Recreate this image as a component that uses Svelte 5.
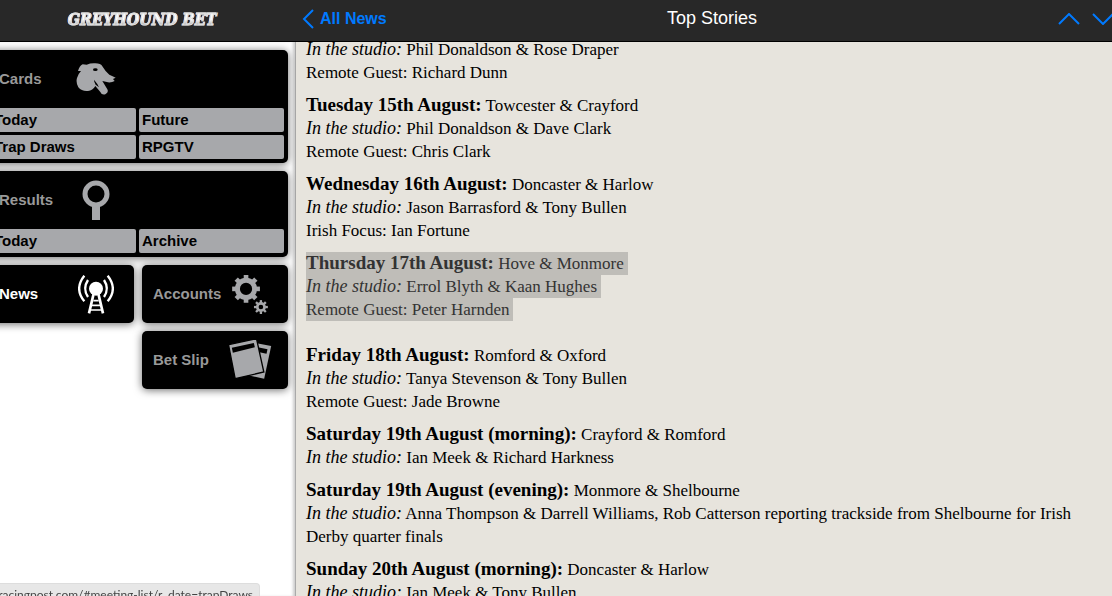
<script lang="ts">
  type Line = { label?: string; style?: 'date' | 'note'; text: string };
  type Entry = { lines: Line[]; selected?: boolean };

  const studio = (text: string): Line => ({ label: 'In the studio:', style: 'note', text });
  const date = (label: string, text: string): Line => ({ label: label + ':', style: 'date', text });

  const entries: Entry[] = [
    { lines: [studio('Phil Donaldson & Rose Draper'), { text: 'Remote Guest: Richard Dunn' }] },
    {
      lines: [
        date('Tuesday 15th August', 'Towcester & Crayford'),
        studio('Phil Donaldson & Dave Clark'),
        { text: 'Remote Guest: Chris Clark' }
      ]
    },
    {
      lines: [
        date('Wednesday 16th August', 'Doncaster & Harlow'),
        studio('Jason Barrasford & Tony Bullen'),
        { text: 'Irish Focus: Ian Fortune' }
      ]
    },
    {
      selected: true,
      lines: [
        date('Thursday 17th August', 'Hove & Monmore'),
        studio('Errol Blyth & Kaan Hughes'),
        { text: 'Remote Guest: Peter Harnden' }
      ]
    },
    {
      lines: [
        date('Friday 18th August', 'Romford & Oxford'),
        studio('Tanya Stevenson & Tony Bullen'),
        { text: 'Remote Guest: Jade Browne' }
      ]
    },
    { lines: [date('Saturday 19th August (morning)', 'Crayford & Romford'), studio('Ian Meek & Richard Harkness')] },
    {
      lines: [
        date('Saturday 19th August (evening)', 'Monmore & Shelbourne'),
        studio('Anna Thompson & Darrell Williams, Rob Catterson reporting trackside from Shelbourne for Irish Derby quarter finals')
      ]
    },
    { lines: [date('Sunday 20th August (morning)', 'Doncaster & Harlow'), studio('Ian Meek & Tony Bullen')] }
  ];

  const teeth = [0, 45, 90, 135, 180, 225, 270, 315];
</script>

<div class="app">
  <aside class="sidebar">
    <header class="bar brand"><span class="logo">GREYHOUND BET</span></header>
    <nav class="menu">
      <section class="card wide">
        <a class="head" href="#cards">
          <span>Cards</span>
          <svg viewBox="18 22 120 102" width="40" height="34">
            <path fill="#a7a8ab" d="M38 29L50 30Q62 25 76 26Q92 26 98 36Q106 50 118 60Q128 64 137 69L129 73L134 79Q126 84 114 83L97 79L112 104Q117 113 106 119Q95 122 91 112L76 94Q68 108 54 109Q36 111 25 98Q17 84 21 70Q25 57 33 49L24 49Q28 34 38 29Z" />
            <ellipse cx="76" cy="45" rx="7" ry="4" />
            <path d="M72 75Q82 86 87 98L77 90Q72 82 72 75Z" />
          </svg>
        </a>
        <div class="subs">
          <a href="#today">Today</a>
          <a href="#future">Future</a>
          <a href="#trap-draws">Trap Draws</a>
          <a href="#rpgtv">RPGTV</a>
        </div>
      </section>

      <section class="card wide">
        <a class="head" href="#results">
          <span>Results</span>
          <svg viewBox="0 0 28 40" width="28" height="40">
            <circle cx="14" cy="14" r="11" fill="none" stroke="#a7a8ab" stroke-width="5" />
            <path fill="#a7a8ab" d="M10 26h8v14h-8z" />
          </svg>
        </a>
        <div class="subs">
          <a href="#results-today">Today</a>
          <a href="#archive">Archive</a>
        </div>
      </section>

      <section class="card">
        <a class="head active" href="#news">
          <span>News</span>
          <svg viewBox="24 28 108 117" width="36" height="39">
            <circle cx="78" cy="69" r="21" fill="#fff" />
            <path d="M71 84L57 143M85 84L99 143" stroke="#fff" stroke-width="8" />
            <path d="M70 105H86M66 119H90M63 133H93" stroke="#fff" stroke-width="5" />
            <g fill="none" stroke="#fff" stroke-width="7">
              <path d="M54 43Q37 69 54 94M102 43Q119 69 102 94" />
              <path d="M43 30Q12 69 43 107M113 30Q144 69 113 107" />
            </g>
          </svg>
        </a>
      </section>

      <section class="card">
        <a class="head" href="#accounts">
          <span>Accounts</span>
          <svg viewBox="36 28 108 118" width="36" height="39">
            <g fill="none" stroke="#a7a8ab">
              <circle cx="78" cy="70" r="26" stroke-width="15" />
              {#each teeth as angle}
                <path d="M78 28v12" stroke-width="14" transform="rotate({angle} 78 70)" />
              {/each}
              <circle cx="123" cy="125" r="11" stroke-width="8" />
              {#each teeth as angle}
                <path d="M123 104v8" stroke-width="7" transform="rotate({angle} 123 125)" />
              {/each}
            </g>
          </svg>
        </a>
      </section>

      <section class="card last">
        <a class="head" href="#bet-slip">
          <span>Bet Slip</span>
          <svg viewBox="24 28 128 120" width="43" height="40">
            <path fill="#a7a8ab" d="M92 35L150 46L129 144L80 134Z" />
            <path d="M110 50L139 56L136 69L108 63Z" />
            <path fill="#a7a8ab" stroke="#000" stroke-width="4" d="M22 42L106 24L128 124L42 144Z" />
            <path d="M32 51L98 37L101 50L35 66Z" />
          </svg>
        </a>
      </section>
    </nav>
  </aside>

  <main class="main">
    <header class="bar toolbar">
      <a class="back" href="#all-news">
        <svg viewBox="0 0 12 20" width="12" height="20"><path d="M11 1L2 10L11 19" /></svg>
        All News
      </a>
      <h1>Top Stories</h1>
      <div class="arrows">
        <button aria-label="Previous story">
          <svg viewBox="0 0 22 12" width="22" height="12"><path d="M1 11L11 1L21 11" /></svg>
        </button>
        <button aria-label="Next story">
          <svg viewBox="0 0 22 12" width="22" height="12"><path d="M1 1L11 11L21 1" /></svg>
        </button>
      </div>
    </header>

    <div class="pane">
      <article>
        {#each entries as entry}
          <p class:selected={entry.selected}>
            {#each entry.lines as line}
              <span class="line">
                {#if line.style === 'date'}<strong>{line.label}</strong>{:else if line.style === 'note'}<em>{line.label}</em>{/if}
                {line.text}
              </span>
            {/each}
          </p>
        {/each}
      </article>
    </div>
  </main>

  <div class="status">racingpost.com/#meeting-list/r_date=trapDraws</div>
</div>

<style>
  :global(body) {
    overflow: hidden;
    background: #fff;
  }

  .app {
    display: flex;
    height: 100vh;
    overflow: hidden;
    font-family: Arial, "Liberation Sans", sans-serif;
  }

  a {
    color: inherit;
    text-decoration: none;
  }

  .bar {
    box-sizing: border-box;
    flex: none;
    height: 42px;
    background: #282828;
    border-bottom: 1px solid #000;
  }

  .sidebar {
    flex: none;
    display: flex;
    flex-direction: column;
    width: 296px;
  }

  .brand {
    display: flex;
    align-items: center;
    justify-content: center;
    padding: 0 12px 3px 0;
  }

  .logo {
    font: italic bold 16px "DejaVu Serif Condensed", "DejaVu Serif", serif;
    background: linear-gradient(#fff 50%, #999 85%);
    background-clip: text;
    color: transparent;
    -webkit-text-stroke: 1px #ddd;
  }

  /* the left column runs under the window edge */
  .menu {
    flex: 1;
    display: grid;
    grid-template-columns: 1fr 1fr;
    align-content: start;
    gap: 8px;
    margin-left: -12px;
    padding: 8px 7px 0 0;
    border-right: 1px solid #aaa;
    box-shadow: inset -3px 0 3px -1px #ccc;
  }

  .card {
    background: #000;
    border-radius: 5px;
    box-shadow: 0 1px 8px rgba(0, 0, 0, 0.6);
  }

  .wide {
    grid-column: 1 / -1;
  }

  .last {
    grid-column: 2;
  }

  .head {
    display: grid;
    grid-template-columns: 80px 56px;
    align-items: center;
    height: 58px;
    color: #999;
    font-size: 15px;
    font-weight: bold;
  }

  .head span {
    padding: 0 0 2px 11px;
  }

  .head svg {
    justify-self: center;
  }

  .head.active {
    color: #fff;
  }

  .subs {
    display: grid;
    grid-template-columns: 1fr 1fr;
    gap: 3px;
    padding: 0 4px 4px 3px;
  }

  .subs a {
    padding-left: 3px;
    background: #a7a8ab;
    border-radius: 2px;
    color: #000;
    font-size: 15px;
    font-weight: bold;
    line-height: 24px;
  }

  .main {
    flex: 1;
    min-width: 0;
    display: flex;
    flex-direction: column;
  }

  .toolbar {
    display: grid;
    grid-template-columns: 1fr auto 1fr;
    align-items: center;
    margin-right: -16px;
    padding: 0 6px 4px;
  }

  .toolbar path {
    fill: none;
    stroke: #007aff;
    stroke-width: 2;
  }

  .back {
    display: flex;
    align-items: center;
    gap: 6px;
    color: #007aff;
    font-size: 16px;
    font-weight: bold;
  }

  h1 {
    margin: 0;
    color: #fff;
    font-size: 18px;
    font-weight: normal;
  }

  .arrows {
    display: flex;
    justify-content: flex-end;
    gap: 12px;
    padding-right: 8px;
  }

  .arrows button {
    display: flex;
    padding: 0;
    border: 0;
    background: none;
    cursor: pointer;
  }

  .pane {
    flex: 1;
    min-height: 0;
    overflow: hidden;
    background: #e7e4dd;
  }

  article {
    margin-top: -4px;
    padding: 0 10px;
    color: #000;
    font-family: Georgia, "Liberation Serif", serif;
    font-size: 17px;
    line-height: 23px;
  }

  p {
    margin: 0 0 10px;
  }

  .line {
    display: block;
    width: fit-content;
  }

  /* line-height 0 keeps the larger labels from growing their row */
  strong,
  em {
    line-height: 0;
  }

  strong {
    font-size: 19px;
  }

  em {
    font-size: 18px;
  }

  .selected {
    margin-bottom: 23px;
    color: #333;
  }

  .selected .line {
    padding-right: 4px;
    background: #bfbdb8;
  }

  .status {
    position: fixed;
    left: 0;
    bottom: -10px;
    display: flex;
    justify-content: flex-end;
    box-sizing: border-box;
    width: 260px;
    height: 23px;
    padding-right: 6px;
    overflow: hidden;
    background: #e7e7e7;
    border: 1px solid #ddd;
    border-left: 0;
    border-radius: 0 4px 0 0;
    color: #444;
    font: 12px/22px "Segoe UI", Lato, sans-serif;
    white-space: nowrap;
  }
</style>
